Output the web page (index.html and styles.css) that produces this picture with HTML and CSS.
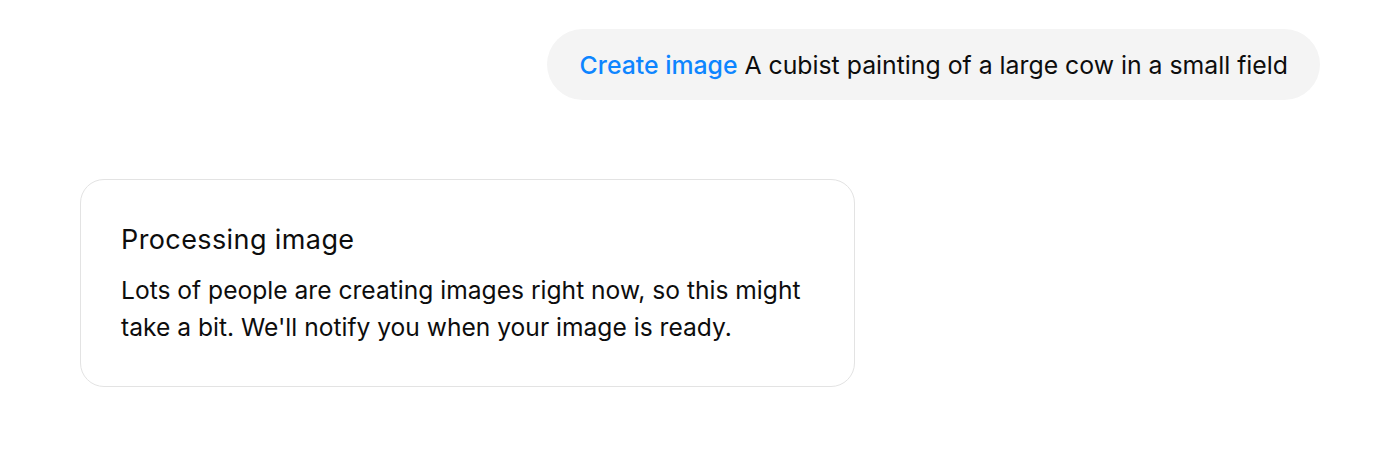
FILE: index.html
```html
<!DOCTYPE html>
<html lang="en">
<head>
<meta charset="utf-8">
<title>Create image</title>
<link rel="stylesheet" href="styles.css">
</head>
<body>
<main class="chat">
  <div class="row row-user">
    <div class="bubble"><span class="cmd">Create image</span> A cubist painting of a large cow in a small field</div>
  </div>
  <div class="row row-bot">
    <div class="card">
      <div class="card-title">Processing image</div>
      <p class="card-body">Lots of people are creating images right now, so this might take a bit. We'll notify you when your image is ready.</p>
    </div>
  </div>
</main>
</body>
</html>
```
FILE: styles.css
```css
* { box-sizing: border-box; }
html, body { margin: 0; padding: 0; background: #ffffff; }
body {
  font-family: Inter, "Noto Sans", "Liberation Sans", sans-serif;
  color: #0d0d0d;
  -webkit-font-smoothing: antialiased;
}
.chat {
  padding: 29px 80px 0 80px;
  display: flex;
  flex-direction: column;
}
.row { display: flex; }
.row-user { justify-content: flex-end; }
.row-bot { justify-content: flex-start; margin-top: 79px; }
.bubble {
  background: #f4f4f4;
  border-radius: 36px;
  padding: 20px 32px 19px 33px;
  font-size: 24.8px;
  line-height: 32px;
  white-space: nowrap;
}
.cmd { color: #0d85ff; font-weight: 500; }
.card {
  width: 775px;
  border: 1px solid #e3e3e3;
  border-radius: 24px;
  padding: 44px 40px 40px 40px;
}
.card-title {
  font-size: 27px;
  line-height: 32px;
  letter-spacing: 0.4px;
}
.card-body {
  margin: 16px 0 0 0;
  font-size: 24.6px;
  line-height: 37px;
}
```
